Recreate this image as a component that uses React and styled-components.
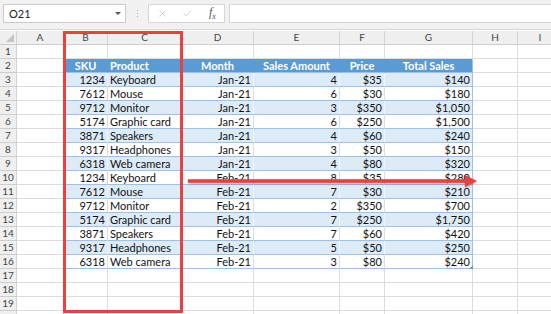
import React from "react";
import styled, { createGlobalStyle } from "styled-components";
import { X, Check } from "lucide-react";

const GlobalStyle = createGlobalStyle`
  body {
    margin: 0;
    background: #ffffff;
    font-family: Lato, "Liberation Sans", sans-serif;
  }
`;

const COLS = [17, 47, 44, 74, 72, 86, 45, 88, 45, 45];
const LETTERS = ["A", "B", "C", "D", "E", "F", "G", "H", "I"];

const HEAD = [
  { text: "SKU", align: "center" },
  { text: "Product", align: "left" },
  { text: "Month", align: "center" },
  { text: "Sales Amount", align: "center" },
  { text: "Price", align: "center" },
  { text: "Total Sales", align: "center" },
];

const DATA = [
  ["1234", "Keyboard", "Jan-21", "4", "$35", "$140"],
  ["7612", "Mouse", "Jan-21", "6", "$30", "$180"],
  ["9712", "Monitor", "Jan-21", "3", "$350", "$1,050"],
  ["5174", "Graphic card", "Jan-21", "6", "$250", "$1,500"],
  ["3871", "Speakers", "Jan-21", "4", "$60", "$240"],
  ["9317", "Headphones", "Jan-21", "3", "$50", "$150"],
  ["6318", "Web camera", "Jan-21", "4", "$80", "$320"],
  ["1234", "Keyboard", "Feb-21", "8", "$35", "$280"],
  ["7612", "Mouse", "Feb-21", "7", "$30", "$210"],
  ["9712", "Monitor", "Feb-21", "2", "$350", "$700"],
  ["5174", "Graphic card", "Feb-21", "7", "$250", "$1,750"],
  ["3871", "Speakers", "Feb-21", "7", "$60", "$420"],
  ["9317", "Headphones", "Feb-21", "5", "$50", "$250"],
  ["6318", "Web camera", "Feb-21", "3", "$80", "$240"],
];

const ALIGN = ["right", "left", "right", "right", "right", "right"];

const Page = styled.div`
  position: relative;
  width: 551px;
  height: 314px;
  overflow: hidden;
  background: #ffffff;
`;

const Toolbar = styled.div`
  height: 30px;
  display: flex;
  align-items: flex-start;
  padding: 4px 0 0 3px;
  box-sizing: border-box;
  background: #f1f1f1;
  border-bottom: 1px solid #d8d8d8;
`;

const NameBox = styled.div`
  width: 123px;
  height: 19px;
  box-sizing: border-box;
  border: 1px solid #c9c9c9;
  background: #ffffff;
  display: flex;
  align-items: center;
  justify-content: space-between;
  padding: 0 4px 0 5px;
  font-size: 11px;
  color: #222;
`;

const Caret = styled.span`
  width: 0;
  height: 0;
  border-left: 3px solid transparent;
  border-right: 3px solid transparent;
  border-top: 3px solid #555;
`;

const Dots = styled.div`
  width: 22px;
  height: 19px;
  display: flex;
  flex-direction: column;
  align-items: center;
  justify-content: center;
  gap: 2px;

  span {
    width: 1px;
    height: 1px;
    background: #a8a8a8;
  }
`;

const FxBox = styled.div`
  width: 77px;
  height: 19px;
  box-sizing: border-box;
  border: 1px solid #d6d6d6;
  background: #ffffff;
  display: flex;
  align-items: center;
  padding-left: 8px;
  gap: 14px;
  color: #b8b8b8;
`;

const FxLabel = styled.span`
  font-family: "Liberation Serif", serif;
  font-style: italic;
  font-size: 12px;
  color: #555;
  margin-left: 2px;

  sub {
    font-size: 8px;
  }
`;

const FormulaInput = styled.div`
  flex: 1;
  height: 19px;
  margin-left: 4px;
  box-sizing: border-box;
  border: 1px solid #d6d6d6;
  border-right: none;
  background: #ffffff;
`;

const Sheet = styled.div`
  display: grid;
  grid-template-columns: ${COLS.map((w) => w + "px").join(" ")};
  grid-auto-rows: 14px;
  margin-top: 1px;
`;

const HeaderCell = styled.div`
  box-sizing: border-box;
  background: #efefef;
  border-right: 1px solid #d2d2d2;
  border-bottom: 1px solid #cdcdcd;
  font-size: 10px;
  color: #444;
  display: flex;
  align-items: center;
  justify-content: center;
  line-height: 13px;
`;

const Corner = styled(HeaderCell)`
  position: relative;

  &::after {
    content: "";
    position: absolute;
    right: 2px;
    bottom: 2px;
    border-left: 8px solid transparent;
    border-bottom: 8px solid #c4c4c4;
  }
`;

const TONES = {
  plain: { bg: "#ffffff", line: "#dcdcdc", bottom: "#dcdcdc", color: "#111" },
  head: { bg: "#5b9bd5", line: "#5b9bd5", bottom: "#9bc2e6", color: "#ffffff" },
  band: { bg: "#ddebf7", line: "#eef5fc", bottom: "#9bc2e6", color: "#111" },
  white: { bg: "#ffffff", line: "#dcdcdc", bottom: "#9bc2e6", color: "#111" },
};

const Cell = styled.div`
  box-sizing: border-box;
  position: relative;
  background: ${(p) => TONES[p.$tone].bg};
  border-right: 1px solid ${(p) => (p.$edge ? "#9bc2e6" : TONES[p.$tone].line)};
  border-bottom: 1px solid ${(p) => TONES[p.$tone].bottom};
  color: ${(p) => TONES[p.$tone].color};
  font-weight: ${(p) => (p.$tone === "head" ? 700 : 400)};
  font-size: 11px;
  line-height: 13px;
  text-align: ${(p) => p.$align || "left"};
  padding: 0 2px;
  white-space: nowrap;
  overflow: visible;
`;

const Handle = styled.span`
  position: absolute;
  right: -1px;
  bottom: -1px;
  border-left: 4px solid transparent;
  border-bottom: 4px solid #5b9bd5;
`;

const RedBox = styled.div`
  position: absolute;
  left: 63px;
  top: 31px;
  width: 120px;
  height: 282px;
  box-sizing: border-box;
  border: 3px solid #ea4040;
  pointer-events: none;
`;

const Arrow = styled.svg`
  position: absolute;
  left: 186px;
  top: 172px;
  filter: drop-shadow(0 1px 1px rgba(0, 0, 0, 0.35));
`;

function renderRow(rowNum) {
  // last row only peeks in at the bottom edge, so its number is not shown
  const cells = [<HeaderCell key="h">{rowNum < 20 ? rowNum : ""}</HeaderCell>];
  for (let c = 0; c < 9; c++) {
    const inTable = c >= 1 && c <= 6 && rowNum >= 2 && rowNum <= 16;
    if (!inTable) {
      cells.push(<Cell key={c} $tone="plain" />);
      continue;
    }
    const i = c - 1;
    if (rowNum === 2) {
      cells.push(
        <Cell key={c} $tone="head" $align={HEAD[i].align} $edge={i === 5}>
          {HEAD[i].text}
        </Cell>
      );
    } else {
      const tone = rowNum % 2 === 1 ? "band" : "white";
      cells.push(
        <Cell key={c} $tone={tone} $align={ALIGN[i]} $edge={i === 5}>
          {DATA[rowNum - 3][i]}
          {rowNum === 16 && i === 5 && <Handle />}
        </Cell>
      );
    }
  }
  return cells;
}

export default function App() {
  const rows = [];
  for (let r = 1; r <= 20; r++) rows.push(...renderRow(r));

  return (
    <Page>
      <GlobalStyle />
      <Toolbar>
        <NameBox>
          O21
          <Caret />
        </NameBox>
        <Dots>
          <span />
          <span />
          <span />
        </Dots>
        <FxBox>
          <X size={11} strokeWidth={1.5} />
          <Check size={11} strokeWidth={1.5} />
          <FxLabel>
            f<sub>x</sub>
          </FxLabel>
        </FxBox>
        <FormulaInput />
      </Toolbar>
      <Sheet>
        <Corner />
        {LETTERS.map((l) => (
          <HeaderCell key={l}>{l}</HeaderCell>
        ))}
        {rows}
      </Sheet>
      <RedBox />
      <Arrow width="296" height="20" viewBox="0 0 296 20">
        <line x1="2" y1="9" x2="282" y2="9" stroke="#e8403e" strokeWidth="3.5" />
        <polygon points="279,3 291,9 279,15" fill="#e8403e" />
      </Arrow>
    </Page>
  );
}
